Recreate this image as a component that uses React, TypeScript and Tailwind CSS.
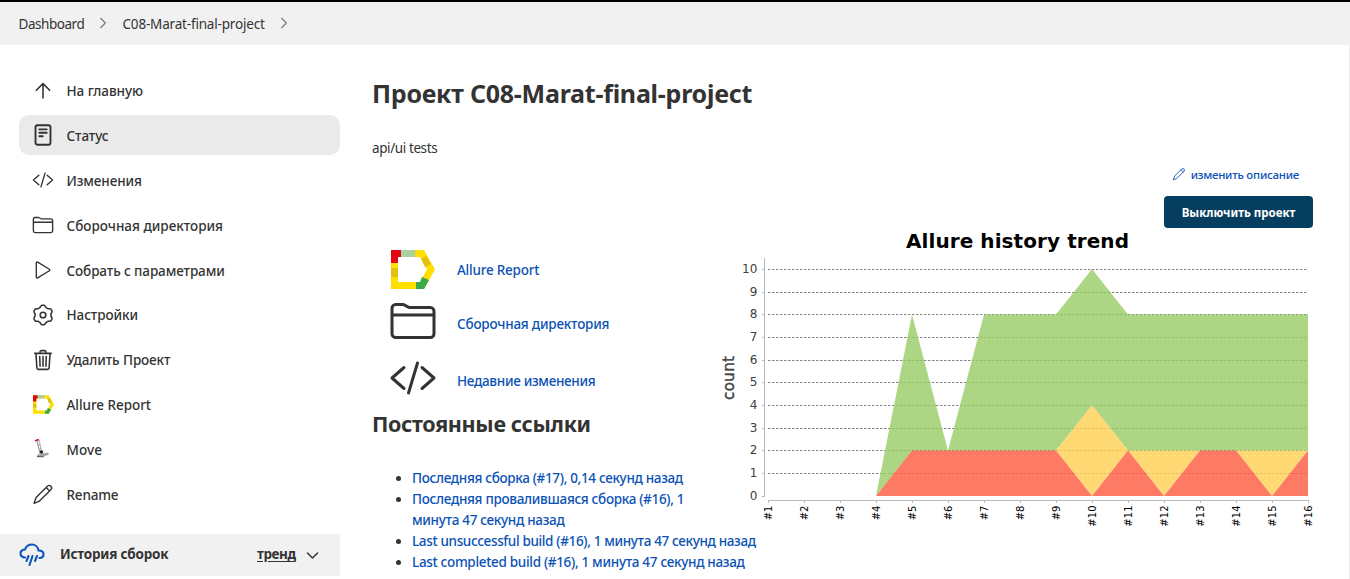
import React from "react";

type IconProps = { className?: string; strokeWidth?: number };

function Line({ className = "size-[22px]", strokeWidth = 32, children }: IconProps & { children: React.ReactNode }) {
  return (
    <svg
      viewBox="0 0 512 512"
      className={className}
      fill="none"
      stroke="currentColor"
      strokeWidth={strokeWidth}
      strokeLinecap="round"
      strokeLinejoin="round"
    >
      {children}
    </svg>
  );
}

const ArrowUp = () => (
  <Line strokeWidth={36}>
    <path d="M100 240L256 84l156 156M256 100v320" />
  </Line>
);
const Doc = () => (
  <Line strokeWidth={44}>
    <rect x="82" y="28" width="348" height="456" rx="48" />
    <path d="M170 124h172M170 204h172M170 284h80" />
  </Line>
);
const Code = (p: IconProps) => (
  <Line {...p}>
    <path d="M160 368L32 256l128-112M352 368l128-112-128-112M304 96l-96 320" />
  </Line>
);
const Folder = (p: IconProps) => (
  <Line {...p}>
    <path d="M440 432H72a40 40 0 01-40-40V120a40 40 0 0140-40h75.89a40 40 0 0122.19 6.72l27.84 18.56a40 40 0 0022.19 6.72H440a40 40 0 0140 40v240a40 40 0 01-40 40zM32 192h448" />
  </Line>
);
const Play = () => (
  <Line>
    <path d="M100 91v330c0 17.44 17 28.52 31 20.16l273-168.370c12.12-7.25 12.12-26.33 0-33.580L131 70.840c-14-8.36-31 2.72-31 20.160z" />
  </Line>
);

// Six-lobed outline, one lobe pointing straight up.
const gearOutline =
  "M" +
  Array.from({ length: 120 }, (_, i) => {
    const a = (i / 120) * Math.PI * 2;
    const r = 207 + 24 * Math.tanh(1.6 * Math.cos(6 * a));
    return `${(256 + r * Math.sin(a)).toFixed(1)} ${(256 - r * Math.cos(a)).toFixed(1)}`;
  }).join("L") +
  "Z";
const Gear = () => (
  <Line strokeWidth={36}>
    <circle cx="256" cy="256" r="66" />
    <path d={gearOutline} />
  </Line>
);
const Trash = () => (
  <Line strokeWidth={36}>
    <path d="M92 102l22 340c.95 18.49 14.4 32 32 32h220c17.67 0 30.87-13.51 32-32l22-340M64 102h384M188 102V62a23.93 23.93 0 0124-24h88a23.93 23.93 0 0124 24v40M256 176v224M180 176l8 224M332 176l-8 224" />
  </Line>
);
const Pencil = (p: IconProps) => (
  <Line {...p}>
    <path d="M364 70a57 57 0 0180 80L174 420 46 472 96 338ZM330 104l80 80" />
  </Line>
);
const Chevron = ({ className, strokeWidth = 36 }: IconProps) => (
  <Line className={className} strokeWidth={strokeWidth}>
    <path d="M180 104l152 152-152 152" />
  </Line>
);

function Allure({ className }: { className?: string }) {
  return (
    <svg viewBox="0 0 44 39" className={className}>
      <path d="M0 0H33L44 19.5L33 39H0Z M7 7V32H29L36 19.5L29 7Z" fill="#ffde00" fillRule="evenodd" />
      <path d="M0 0H10V7H7V13H0Z" fill="#e30613" />
      <path d="M10 0H24V7H10Z" fill="#a8d2a4" />
      <path d="M0 18H7V27H0ZM30 9L35 6L40 14L34 17Z" fill="#e0c012" />
      <path d="M25 39V32H29L31 27L38 30L33 39Z" fill="#3aaa4a" />
    </svg>
  );
}

function HandTruck() {
  return (
    <svg viewBox="0 0 22 22" className="size-[22px]">
      <path d="M5 3L8 15.500" stroke="#888" strokeWidth="1" />
      <path d="M7 2L9.500 13.500" stroke="#aaa" strokeWidth="1" />
      <path d="M6 7h2.500M7 11h2.500" stroke="#999" strokeWidth=".8" />
      <path d="M3 2.800L7 1.500" stroke="#e3122b" strokeWidth="1.600" />
      <path d="M5 16.500L16.500 14.500V17L6 19.500Z" fill="#a5a39b" />
      <circle cx="9.500" cy="14" r="1.700" fill="#222" />
      <path d="M5 18.500L12 18.800" stroke="#55554f" strokeWidth="1" />
    </svg>
  );
}

const tasks = [
  { label: "На главную", icon: <ArrowUp />, track: "tracking-[-0.05px]" },
  { label: "Статус", icon: <Doc />, track: "tracking-[-0.1px]", active: true },
  { label: "Изменения", icon: <Code />, track: "tracking-[-0.1px]" },
  { label: "Сборочная директория", icon: <Folder />, track: "tracking-[0px]" },
  { label: "Собрать с параметрами", icon: <Play />, track: "tracking-[-0.1px]" },
  { label: "Настройки", icon: <Gear />, track: "tracking-[-0.08px]" },
  { label: "Удалить Проект", icon: <Trash />, track: "tracking-[-0.1px]" },
  { label: "Allure Report", icon: <Allure className="h-[19px] w-[21px]" />, track: "tracking-[-0.05px]" },
  { label: "Move", icon: <HandTruck />, track: "tracking-[0.1px]" },
  { label: "Rename", icon: <Pencil />, track: "tracking-[-0.2px]" },
];

const gridRows = [473, 450, 428, 405, 382, 360, 337, 314, 292, 269];
const X = (n: number) => 48 + (n - 1) * 36;
const Y = (v: number) => 266 - v * 22.7;
const area = (pts: number[][]) => pts.map(([n, v]) => `${X(n)},${Y(v)}`).join(" ");

function TrendChart() {
  return (
    <svg width="600" height="300" viewBox="0 0 600 300" className="block font-['DejaVu_Sans',sans-serif]">
      <text x="297.500" y="18" textAnchor="middle" fontSize="20" fontWeight="bold" fill="#000" textLength="223">
        Allure history trend
      </text>
      <text
        transform="translate(14 148) rotate(-90)"
        textAnchor="middle"
        fontSize="15"
        fill="#404040"
        stroke="#404040"
        strokeWidth=".4"
        textLength="44"
      >
        count
      </text>
      <g stroke="#858585" strokeDasharray="2.5 1.5">
        {gridRows.map((y) => (
          <path key={y} d={`M48 ${y - 229.5}H588`} />
        ))}
      </g>
      <g fillOpacity=".8">
        <polygon
          fill="#97cc64"
          points={area([[4, 0], [5, 8], [6, 2], [7, 8], [9, 8], [10, 10], [11, 8], [16, 8], [16, 2], [11, 2], [10, 4], [9, 2], [5, 2]])}
        />
        <polygon fill="#ffd050" points={area([[9, 2], [10, 4], [11, 2], [10, 0]])} />
        <polygon fill="#ffd050" points={area([[11, 2], [13, 2], [12, 0]])} />
        <polygon fill="#ffd050" points={area([[14, 2], [16, 2], [15, 0]])} />
        <polygon
          fill="#fd5a3e"
          points={area([[4, 0], [5, 2], [9, 2], [10, 0], [11, 2], [12, 0], [13, 2], [14, 2], [15, 0], [16, 2], [16, 0]])}
        />
      </g>
      <g stroke="#b8b8b8" shapeRendering="crispEdges">
        <path d="M44.500 28V266.500M48 270.500H588.500" />
        {[496, ...gridRows].map((y) => (
          <path key={y} d={`M42 ${y - 229.5}H45`} />
        ))}
        {Array.from({ length: 16 }, (_, i) => (
          <path key={i} d={`M${X(i + 1) + 0.5} 271V273`} />
        ))}
      </g>
      <g fontSize="12" fill="#404040" textAnchor="end">
        {[496, ...gridRows].map((y, i) => (
          <text key={y} x="37.300" y={y - 230 + 4}>
            {i}
          </text>
        ))}
      </g>
      <g fontSize="10" fill="#000" textAnchor="end">
        {Array.from({ length: 16 }, (_, i) => (
          <text key={i} transform={`translate(${X(i + 1) + 3.5} 275.500) rotate(-90)`}>
            #{i + 1}
          </text>
        ))}
      </g>
    </svg>
  );
}

const links = [
  { text: <>Последняя сборка (#17), 0,14 секунд назад</>, track: "tracking-[-0.33px]" },
  { text: <>Последняя провалившаяся сборка (#16), 1<br />минута 47 секунд назад</>, track: "tracking-[-0.31px]" },
  { text: <>Last unsuccessful build (#16), 1 минута 47 секунд назад</>, track: "tracking-[-0.35px]" },
  { text: <>Last completed build (#16), 1 минута 47 секунд назад</>, track: "tracking-[-0.31px]" },
];

export default function App() {
  return (
    <div className="flex h-[579px] w-[1350px] flex-col overflow-hidden bg-white font-['Noto_Sans',sans-serif] text-[#333]">
      <header className="flex h-[45px] shrink-0 items-center border-t-2 border-black bg-[#f1f1f1] pl-[18.5px] text-[13.5px] leading-5">
        <span className="w-[66px] pt-px whitespace-nowrap tracking-[-0.46px]">Dashboard</span>
        <Chevron className="mr-[12px] mb-[2px] ml-[10px] size-4 text-[#777]" strokeWidth={34} />
        <span className="w-[143px] pt-px whitespace-nowrap tracking-[-0.18px]">C08-Marat-final-project</span>
        <Chevron className="mb-[2px] ml-[10px] size-4 text-[#777]" strokeWidth={34} />
      </header>
      <div className="flex min-h-0 flex-1 border-r border-[#eee]">
        <aside className="flex w-[340px] shrink-0 flex-col pt-[25px]">
          <nav className="flex h-[444px] flex-col gap-[4.85px] pl-[19px]">
            {tasks.map((t) => (
              <a
                key={t.label}
                className={`flex h-10 shrink-0 items-center gap-[12.5px] rounded-[10px] pt-px pl-[13px] text-[13.5px] font-medium whitespace-nowrap ${t.active ? "bg-[#eaeaea]" : ""}`}
              >
                <span className="flex size-[22px] items-center justify-center">{t.icon}</span>
                <span className={`pt-[1.5px] ${t.track}`}>{t.label}</span>
              </a>
            ))}
          </nav>
          <div className="mt-[20px] flex h-[42px] shrink-0 items-center bg-[#f1f1f1] pl-[19px] text-[13.5px] font-bold whitespace-nowrap">
            <svg viewBox="0 0 26 24" className="h-6 w-[26px]" fill="none" stroke="#0d54bd" strokeWidth="2.1" strokeLinecap="round">
              <path d="M6 14.500C3.500 14.500 1.500 12.800 1.500 10.500S3.500 6.800 6 6.500C7 3.500 9.800 1.500 13 1.500S19 4 19.500 7.500C22.500 7.500 24.500 9 24.500 11.200S23 14.800 20.500 15" />
              <path d="M9.500 13L7.500 18M13.500 13L10.500 22M18 13L16 18" />
            </svg>
            <span className="ml-[15px] w-[197px] pb-px tracking-[-0.22px]">История сборок</span>
            <span className="w-[39px] pb-px tracking-[-0.4px] underline underline-offset-2">тренд</span>
            <Chevron className="ml-[8px] size-[17px] rotate-90" strokeWidth={44} />
          </div>
        </aside>
        <main className="flex flex-1 pl-8">
          <section className="flex w-[348px] shrink-0 flex-col whitespace-nowrap">
            <h1 className="mt-[32px] text-[25px] leading-8 font-bold tracking-[-0.24px]">Проект C08-Marat-final-project</h1>
            <p className="mt-[29px] text-[13.5px] leading-5 tracking-[-0.4px]">api/ui tests</p>
            <div className="mt-[85px] flex flex-col text-[13.5px] font-medium text-[#0b52b5]">
              <a className="flex h-[52px] items-center pl-[19px]">
                <Allure className="h-[39px] w-[44px]" />
                <span className="ml-[22px] pt-[2px] tracking-[-0.22px]">Allure Report</span>
              </a>
              <a className="flex h-[56px] items-center pl-[17px]">
                <Folder className="mb-[5px] size-12 text-[#333]" />
                <span className="ml-5 pt-[2px] tracking-[-0.21px]">Сборочная директория</span>
              </a>
              <a className="flex h-[58px] items-center pl-[17px]">
                <Code className="mb-1 size-12 text-[#333]" />
                <span className="ml-5 pt-[2px] tracking-[-0.31px]">Недавние изменения</span>
              </a>
            </div>
            <h2 className="mt-px text-[21.500px] leading-7 font-bold tracking-[-0.33px]">Постоянные ссылки</h2>
            <ul className="mt-[30px] list-disc pl-10 text-[13.5px] leading-[21px] font-medium">
              {links.map((l, i) => (
                <li key={i}>
                  <a className={`text-[#0b52b5] ${l.track}`}>{l.text}</a>
                </li>
              ))}
            </ul>
          </section>
          <section className="flex w-[593px] shrink-0 flex-col items-end pt-[119px]">
            <a className="mr-[14px] flex h-5 items-center gap-[5px] text-[11.5px] font-medium whitespace-nowrap text-[#0b52b5]">
              <Pencil className="size-[14px]" />
              <span className="pt-px tracking-[-0.25px]">изменить описание</span>
            </a>
            <button className="mt-3 flex h-8 w-[149px] items-center justify-center rounded-[4px] bg-[#063e60] pt-px text-[11.5px] font-bold whitespace-nowrap text-white">
              Выключить проект
            </button>
            <div className="mt-[2px] w-[593px]">
              <TrendChart />
            </div>
          </section>
        </main>
      </div>
    </div>
  );
}
